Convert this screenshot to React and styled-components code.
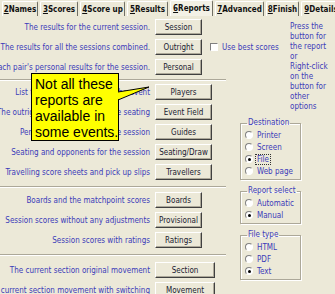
import React from "react"
import styled, { createGlobalStyle } from "styled-components"

const face = "#ece9d8"
const ink = "#3b3bb8"

const GlobalStyle = createGlobalStyle`
  html, body {
    margin: 0;
    padding: 0;
    background: ${face};
  }
  body {
    font-family: "DejaVu Sans Condensed", "Liberation Sans", sans-serif;
  }
`

const tabs = [
  { key: "2", label: "Names", w: 36 },
  { key: "3", label: "Scores", w: 38 },
  { key: "4", label: "Score up", w: 45 },
  { key: "5", label: "Results", w: 41 },
  { key: "6", label: "Reports", w: 43, active: true },
  { key: "7", label: "Advanced", w: 49 },
  { key: "8", label: "Finish", w: 33 },
  { key: "9", label: "Details", w: 40 },
]

const groups = [
  {
    w: 47,
    after: [2, 1],
    rows: [
      ["The results for the current session.", "Session"],
      ["The results for all the sessions combined.", "Outright", true],
      ["Each pair's personal results for the session.", "Personal"],
    ],
  },
  {
    w: 57,
    after: [4, 2],
    rows: [
      ["List the players entered for the event", "Players"],
      ["The outright results listed by table seating", "Event Field"],
      ["Personal guide cards for the session", "Guides"],
      ["Seating and opponents for the session", "Seating/Draw"],
      ["Travelling score sheets and pick up slips", "Travellers"],
    ],
  },
  {
    w: 47,
    after: [4, 4],
    rows: [
      ["Boards and the matchpoint scores", "Boards"],
      ["Session scores without any adjustments", "Provisional"],
      ["Session scores with ratings", "Ratings"],
    ],
  },
  {
    w: 60,
    rows: [
      ["The current section original movement", "Section"],
      ["The current section movement with switching", "Movement"],
    ],
  },
]

const boxes = [
  { title: "Destination", items: ["Printer", "Screen", "File", "Web page"], on: "File", focus: true },
  { title: "Report select", items: ["Automatic", "Manual"], on: "Manual" },
  { title: "File type", items: ["HTML", "PDF", "Text"], on: "Text" },
]

export default function App() {
  return (
    <Page>
      <GlobalStyle />
      <TabStrip>
        {tabs.map(t => (
          <Tab key={t.key} $w={t.w} $active={t.active}>
            <u>{t.key}</u>{t.label}
          </Tab>
        ))}
      </TabStrip>

      <Body>
        <LeftPane>
          {groups.map((g, i) => (
            <React.Fragment key={i}>
              {g.rows.map(([text, label, check]) => (
                <Row key={label}>
                  <Desc><span>{text}</span></Desc>
                  <Button $w={g.w}>{label}</Button>
                  {check && (
                    <Check>
                      <CheckBox />
                      Use best scores
                    </Check>
                  )}
                </Row>
              ))}
              {g.after && <Separator $top={g.after[0]} $bottom={g.after[1]} />}
            </React.Fragment>
          ))}
        </LeftPane>

        <RightPane>
          <Hint>
            Press the<br />button for<br />the report<br />or<br />Right-click<br />
            on the<br />button for<br />other<br />options
          </Hint>
          {boxes.map(b => (
            <GroupBox key={b.title}>
              <Legend>{b.title}</Legend>
              {b.items.map(item => (
                <Radio key={item}>
                  <RadioDot $on={item === b.on} />
                  <RadioText $focus={b.focus && item === b.on}>{item}</RadioText>
                </Radio>
              ))}
            </GroupBox>
          ))}
        </RightPane>
      </Body>

      <Callout>
        Not all these<br />reports are<br />available in<br />some events.
      </Callout>
      <Tail width="34" height="20" viewBox="0 0 34 20">
        <polygon points="0,8 32,3 0,16" fill="#ffff00" />
        <polyline points="1,8 32,3 1,16" fill="none" stroke="#000" strokeWidth="1" />
      </Tail>
    </Page>
  )
}

const Page = styled.div`
  position: relative;
  width: 335px;
  height: 294px;
  overflow: hidden;
  background: ${face};
  font-size: 8px;
`

const TabStrip = styled.div`
  display: flex;
  align-items: flex-end;
  gap: 2px;
  height: 16px;
  padding-left: 2px;
  margin-bottom: 1px;
`

const Tab = styled.div`
  flex: none;
  box-sizing: border-box;
  width: ${p => p.$w}px;
  height: ${p => (p.$active ? 16 : 15)}px;
  display: flex;
  align-items: center;
  justify-content: center;
  border: 1px solid;
  border-bottom: none;
  border-color: #fff #716f64 #716f64 #fff;
  border-radius: 2px 2px 0 0;
  background: ${p => (p.$active ? "#f3f1e6" : face)};
  color: #111;
  font-weight: bold;
  white-space: nowrap;
  overflow: hidden;

  u {
    text-decoration-thickness: 1px;
  }
`

const Body = styled.div`
  display: grid;
  grid-template-columns: 228px 1fr;
`

const LeftPane = styled.div`
  display: flex;
  flex-direction: column;
`

const Row = styled.div`
  display: grid;
  grid-template-columns: 150px auto auto;
  column-gap: 5px;
  align-items: center;
  justify-content: start;
  height: 20px;
`

const Desc = styled.div`
  display: flex;
  justify-content: flex-end;
  white-space: nowrap;
  color: ${ink};
`

const Button = styled.button`
  box-sizing: border-box;
  width: ${p => p.$w}px;
  height: 16px;
  padding: 0;
  font: inherit;
  color: #1a1a30;
  background: ${face};
  border: 1px solid;
  border-color: #fff #404040 #404040 #fff;
  box-shadow: inset -1px -1px #aca899;
  white-space: nowrap;
`

const Check = styled.label`
  display: flex;
  align-items: center;
  gap: 4px;
  margin-left: 3px;
  color: ${ink};
  white-space: nowrap;
`

const CheckBox = styled.span`
  box-sizing: border-box;
  width: 8px;
  height: 8px;
  background: #fff;
  border: 1px solid;
  border-color: #808080 #fff #fff #808080;
`

const Separator = styled.div`
  width: 226px;
  height: 1px;
  margin: ${p => p.$top}px 0 ${p => p.$bottom}px;
  background: #aca899;
  border-bottom: 1px solid #fff;
`

const RightPane = styled.div`
  display: flex;
  flex-direction: column;
  align-items: flex-start;
`

const Hint = styled.div`
  margin: 5px 0 0 62px;
  line-height: 10px;
  color: ${ink};
`

const GroupBox = styled.fieldset`
  box-sizing: border-box;
  width: 61px;
  min-width: 0;
  margin: 6px 0 0 12px;
  padding: 1px 0 2px 4px;
  border: 1px solid #aca899;
  box-shadow: inset 1px 1px #fff, 1px 1px #fff;
  display: flex;
  flex-direction: column;
`

const Legend = styled.legend`
  padding: 0 1px;
  margin-left: 2px;
  line-height: 10px;
  color: ${ink};
  white-space: nowrap;
`

const Radio = styled.div`
  display: flex;
  align-items: center;
  gap: 3px;
  height: 12px;
`

const RadioDot = styled.span`
  position: relative;
  box-sizing: border-box;
  width: 8px;
  height: 8px;
  border-radius: 50%;
  background: #fff;
  border: 1px solid;
  border-color: #808080 #fff #fff #808080;

  &::after {
    content: "";
    position: absolute;
    inset: 1.5px;
    border-radius: 50%;
    background: ${p => (p.$on ? "#000" : "transparent")};
  }
`

const RadioText = styled.span`
  color: ${ink};
  padding: 0 1px;
  outline: ${p => (p.$focus ? "1px dotted #333" : "none")};
  white-space: nowrap;
`

const Callout = styled.div`
  position: absolute;
  left: 31px;
  top: 73px;
  box-sizing: border-box;
  width: 88px;
  height: 68px;
  padding: 2px 0 0 3px;
  background: #ffff00;
  border: 1px solid #000;
  font-family: "Liberation Sans", Arial, sans-serif;
  font-size: 14px;
  line-height: 16px;
  color: #000;
  white-space: nowrap;
`

const Tail = styled.svg`
  position: absolute;
  left: 117px;
  top: 84px;
`
